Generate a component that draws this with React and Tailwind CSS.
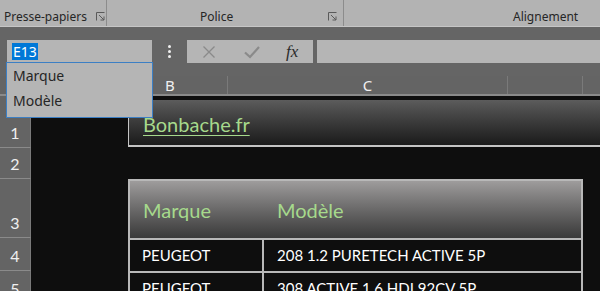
import React from "react";

const Launcher = () => (
    <svg width="9" height="9" viewBox="0 0 9 9" className="shrink-0">
        <path d="M0.5 8.5 V0.5 H8.5" fill="none" stroke="#5a5a5a" strokeWidth="1" />
        <path d="M3 3 L8 8 M8 4.5 V8 H4.5" fill="none" stroke="#5a5a5a" strokeWidth="1" />
    </svg>
);

const RowHead = ({ n, h }) => (
    <div
        className={`w-[31px] shrink-0 bg-[#646464] border-b border-[#8a8a8a] border-r border-r-[#7a7a7a] flex items-end justify-center pb-[2px] text-[#f0f0f0] text-[16px] ${h}`}
    >
        {n}
    </div>
);

export default function App() {
    return (
        <div
            className="w-[600px] h-[291px] overflow-hidden relative bg-[#0e0e0e] flex flex-col"
            style={{ fontFamily: '"Noto Sans", "Open Sans", sans-serif' }}
        >
            {/* Ribbon */}
            <div className="h-[27px] shrink-0 bg-[#b3b3b3] border-b border-[#c6c6c6] flex text-[12px] text-[#262626] whitespace-nowrap">
                <div className="w-[107px] flex items-center gap-[9px] pl-[4px] pt-[7px] border-r border-[#8c8c8c]">
                    <span>Presse-papiers</span>
                    <Launcher />
                </div>
                <div className="w-[237px] flex items-center pt-[7px] border-r border-[#8c8c8c]">
                    <span className="ml-[93px]">Police</span>
                    <span className="ml-auto mr-[6px]">
                        <Launcher />
                    </span>
                </div>
                <div className="flex-1 flex items-center pt-[7px]">
                    <span className="ml-[169px]">Alignement</span>
                </div>
            </div>

            {/* Formula bar */}
            <div className="h-[49px] shrink-0 bg-[#656565] flex items-start pt-[13px]">
                <div className="ml-[7px] w-[145px] h-[23px] bg-[#b5b5b5] flex items-center pl-[5px]">
                    <span className="bg-[#0078d7] text-white text-[14px] leading-[17px] px-[1px]">E13</span>
                </div>
                <div className="w-[35px] h-[23px] flex flex-col items-center justify-center gap-[2px]">
                    <span className="w-[3px] h-[3px] bg-[#f0f0f0] rounded-full" />
                    <span className="w-[3px] h-[3px] bg-[#f0f0f0] rounded-full" />
                    <span className="w-[3px] h-[3px] bg-[#f0f0f0] rounded-full" />
                </div>
                <div className="w-[126px] h-[23px] bg-[#b5b5b5] flex items-center">
                    <svg width="14" height="14" viewBox="0 0 14 14" className="ml-[15px]">
                        <path d="M1.5 1.5 L12.5 12.5 M12.5 1.5 L1.5 12.5" stroke="#8a8a8a" strokeWidth="1.3" />
                    </svg>
                    <svg width="16" height="14" viewBox="0 0 16 14" className="ml-[28px]">
                        <path d="M1 7.5 L6 12 L15 2" fill="none" stroke="#8a8a8a" strokeWidth="2.2" />
                    </svg>
                    <span
                        className="ml-[26px] text-[17px] italic text-[#2a2a2a] leading-none"
                        style={{ fontFamily: '"Liberation Serif", serif' }}
                    >
                        fx
                    </span>
                </div>
                <div className="ml-[4px] flex-1 h-[23px] bg-[#b5b5b5]" />
            </div>

            {/* Column headers */}
            <div className="h-[20px] shrink-0 bg-[#646464] border-b-2 border-[#8a8a8a] flex text-[#f0f0f0] text-[15px] leading-[18px]">
                <div className="w-[31px] border-r border-[#7a7a7a]" />
                <div className="w-[82px] border-r border-[#7a7a7a]" />
                <div className="w-[115px] border-r border-[#7a7a7a] flex justify-center items-end">B</div>
                <div className="w-[280px] border-r border-[#7a7a7a] flex justify-center items-end">C</div>
                <div className="w-[75px] border-r border-[#7a7a7a]" />
            </div>

            {/* Grid */}
            <div
                className="flex-1 flex flex-col"
                style={{ fontFamily: '"Lato", "Liberation Sans", sans-serif' }}
            >
                <div className="flex">
                    <RowHead n="1" h="h-[52px]" />
                    <div className="pl-[97px] pt-[4px] flex-1">
                        <div className="h-[47px] border-l border-b-2 border-[#c4c4c4] bg-gradient-to-b from-[#5c5c5c] to-[#1b1b1b] flex items-center pl-[14px] pt-[2px]">
                            <span className="text-[#a6d98c] text-[20px] underline underline-offset-[3px] decoration-1">
                                Bonbache.fr
                            </span>
                        </div>
                    </div>
                </div>
                <div className="flex">
                    <RowHead n="2" h="h-[31px]" />
                </div>
                <div className="flex">
                    <RowHead n="3" h="h-[59px]" />
                    <div className="pl-[97px] flex-1">
                        <div className="w-[455px] h-[59px] border-2 border-b-0 border-[#b8b8b8] bg-gradient-to-b from-[#9e9c9c] to-[#3a3a3a] flex items-center pt-[1px] text-[#a6d98c] text-[20px]">
                            <span className="w-[134px] pl-[13px]">Marque</span>
                            <span className="pl-[13px]">Modèle</span>
                        </div>
                    </div>
                </div>
                <div className="flex">
                    <RowHead n="4" h="h-[33px]" />
                    <div className="pl-[97px] flex-1">
                        <div className="w-[455px] h-[33px] border-2 border-b-0 border-[#b8b8b8] flex text-white text-[15px]">
                            <div className="w-[134px] border-r-2 border-[#b8b8b8] flex items-center pl-[12px]">PEUGEOT</div>
                            <div className="flex items-center pl-[13px]">208 1.2 PURETECH ACTIVE 5P</div>
                        </div>
                    </div>
                </div>
                <div className="flex">
                    <RowHead n="5" h="h-[33px]" />
                    <div className="pl-[97px] flex-1">
                        <div className="w-[455px] h-[33px] border-2 border-b-0 border-[#b8b8b8] flex text-white text-[15px]">
                            <div className="w-[134px] border-r-2 border-[#b8b8b8] flex items-center pl-[12px]">PEUGEOT</div>
                            <div className="flex items-center pl-[13px]">308 ACTIVE 1.6 HDI 92CV 5P</div>
                        </div>
                    </div>
                </div>
            </div>

            {/* Name box dropdown */}
            <div className="absolute left-[6px] top-[62px] w-[147px] h-[56px] bg-[#b5b5b5] border border-[#3c7fc4] flex flex-col text-[14px] text-[#262626] pl-[6px]">
                <div className="h-[25px] flex items-center">Marque</div>
                <div className="h-[25px] flex items-center">Modèle</div>
            </div>
        </div>
    );
}
